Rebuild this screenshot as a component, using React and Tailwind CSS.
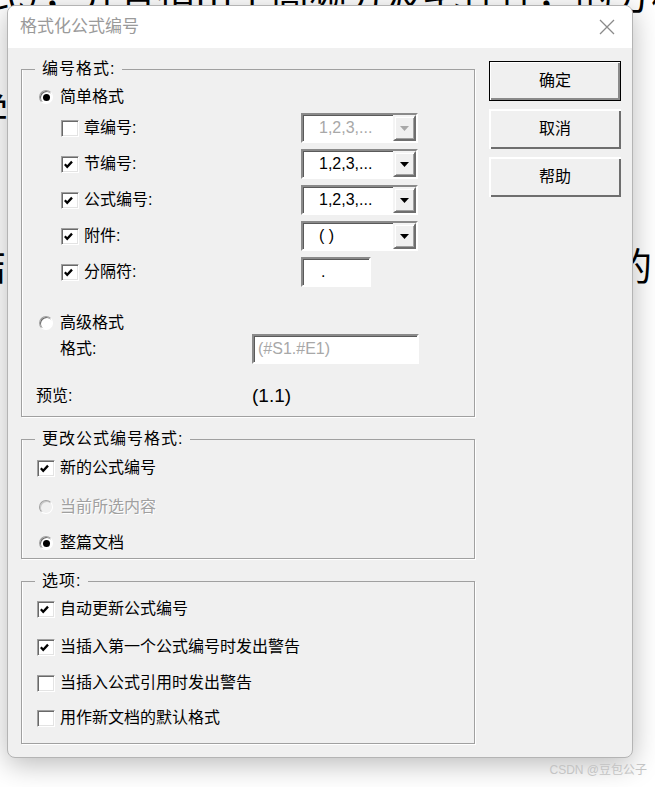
import React from "react";

const UI = "font-['Liberation_Sans','Noto_Sans_CJK_SC',sans-serif]";

function Check({ checked }) {
  return (
    <span className="flex h-[17px] w-[18px] shrink-0 items-center border border-t-[#a0a0a0] border-l-[#a0a0a0] border-r-white border-b-white bg-white pl-[2px] shadow-[inset_1px_1px_0_#696969,inset_-1px_-1px_0_#e3e3e3]">
      {checked && (
        <svg width="9" height="9" viewBox="0 0 9 9">
          <path d="M0.8 4.2 L3.2 6.8 L8 1.6" stroke="#000" strokeWidth="2.3" fill="none" />
        </svg>
      )}
    </span>
  );
}

function Radio({ checked, disabled }) {
  return (
    <span
      className={`flex h-[14px] w-[14px] shrink-0 items-center justify-center rounded-full border border-t-[#a0a0a0] border-l-[#a0a0a0] border-r-white border-b-white ${
        disabled
          ? "bg-[#f0f0f0] shadow-[inset_1px_1px_0_#c8c8c8]"
          : "bg-white shadow-[inset_1px_1px_0_#696969]"
      }`}
    >
      {checked && <span className="h-[7px] w-[7px] rounded-full bg-black" />}
    </span>
  );
}

function Combo({ value, disabled }) {
  return (
    <div className="flex h-[30px] w-[117px] border-2 border-t-[#8a8a8a] border-l-[#8a8a8a] border-r-white border-b-white bg-white shadow-[inset_1px_1px_0_#5a5a5a]">
      <span
        className={`flex-1 pl-[16px] text-[16px] leading-[26px] ${
          disabled ? "text-[#a8a8a8]" : "text-black"
        }`}
      >
        {value}
      </span>
      <span className="flex h-[26px] w-[23px] items-center justify-center border-2 border-t-[#f4f4f4] border-l-[#f4f4f4] border-r-[#6e6e6e] border-b-[#6e6e6e] bg-[#f0f0f0] shadow-[inset_1px_1px_0_#fff,inset_-1px_-1px_0_#a0a0a0]">
        <svg width="9" height="5" viewBox="0 0 9 5">
          <polygon points="0,0 9,0 4.5,5" fill={disabled ? "#a8a8a8" : "#000"} />
        </svg>
      </span>
    </div>
  );
}

function TextBox({ value, className, textClass }) {
  return (
    <div
      className={`flex h-[30px] items-center border-2 border-t-[#8a8a8a] border-l-[#8a8a8a] border-r-white border-b-white bg-white shadow-[inset_1px_1px_0_#5a5a5a] ${className}`}
    >
      <span className={`text-[16px] leading-[26px] ${textClass}`}>{value}</span>
    </div>
  );
}

function Button({ children, isDefault }) {
  return (
    <div
      className={`flex h-[40px] w-[132px] items-center justify-center bg-[#f0f0f0] text-[16px] text-black ${
        isDefault
          ? "border border-black shadow-[inset_1px_1px_0_#fff,inset_-2px_-2px_0_#8a8a8a]"
          : "shadow-[inset_2px_2px_0_#fff,inset_-2px_-2px_0_#6e6e6e]"
      }`}
    >
      {children}
    </div>
  );
}

function Group({ title, className, children }) {
  return (
    <fieldset
      className={`w-[454px] border border-[#a0a0a0] shadow-[inset_1px_0_0_#fff,1px_1px_0_#fff] ${className}`}
    >
      <legend className="ml-[13px] px-[7px] text-[16px] leading-[20px] tracking-[1px] text-black">
        {title}
      </legend>
      {children}
    </fieldset>
  );
}

function CheckRow({ label, checked, className }) {
  return (
    <div className={`flex h-[22px] items-center pl-[15px] ${className}`}>
      <Check checked={checked} />
      <span className="ml-[5px] text-[16px] leading-[22px] text-black">{label}</span>
    </div>
  );
}

function RadioRow({ label, checked, disabled, className }) {
  return (
    <div className={`flex h-[22px] items-center pl-[17px] ${className}`}>
      <Radio checked={checked} disabled={disabled} />
      <span
        className={`ml-[7px] text-[16px] leading-[22px] ${
          disabled ? "text-[#a0a0a0] [text-shadow:1px_1px_0_#fff]" : "text-black"
        }`}
      >
        {label}
      </span>
    </div>
  );
}

const numberRows = [
  { label: "章编号:", checked: false, value: "1,2,3,...", disabled: true },
  { label: "节编号:", checked: true, value: "1,2,3,..." },
  { label: "公式编号:", checked: true, value: "1,2,3,..." },
  { label: "附件:", checked: true, value: "( )" },
  { label: "分隔符:", checked: true, value: "." },
];

export default function App() {
  return (
    <div className={`relative h-[787px] w-full overflow-hidden bg-white ${UI}`}>
      {/* document behind the dialog */}
      <div className="whitespace-nowrap font-['Noto_Sans_CJK_SC',sans-serif] text-[38px] leading-[42px] text-black">
        <p className="-ml-[14px] -mt-[28px]">式），并且指出了高频分波宅性性，的分析性。</p>
        <p className="-ml-[30px] mt-[75px]">学习了相关的分析方法</p>
        <p className="-ml-[32px] mt-[112px]">结合所提出的方法其分析结果进行验证的</p>
      </div>

      {/* dialog */}
      <div className="absolute left-[7px] top-[5px] flex h-[753px] w-[626px] flex-col overflow-hidden rounded-[8px] border border-[#b4b4b4] bg-[#f0f0f0] shadow-[0_6px_28px_rgba(0,0,0,0.28)]">
        <div className="flex h-[42px] shrink-0 items-center justify-between bg-white pl-[12px] pr-[17px]">
          <span className="text-[17px] text-[#9a9a9a]">格式化公式编号</span>
          <svg width="16" height="16" viewBox="0 0 16 16">
            <path d="M1 1 L15 15 M15 1 L1 15" stroke="#8a8a8a" strokeWidth="1.3" />
          </svg>
        </div>

        <div className="flex pl-[13px]">
          <div className="mt-[11px] flex flex-col">
            <Group title="编号格式:" className="h-[358px]">
              <RadioRow label="简单格式" checked className="mt-[7px]" />
              <div className="mt-[2px] flex flex-col">
                {numberRows.map((r) => (
                  <div key={r.label} className="flex h-[36px] items-center pl-[39px]">
                    <Check checked={r.checked} />
                    <span className="ml-[5px] flex-1 text-[16px] leading-[22px] text-black">
                      {r.label}
                    </span>
                    <div className="mr-[56px] w-[117px]">
                      {r.label === "分隔符:" ? (
                        <TextBox value={r.value} className="w-[70px] pl-[18px]" textClass="text-black" />
                      ) : (
                        <Combo value={r.value} disabled={r.disabled} />
                      )}
                    </div>
                  </div>
                ))}
              </div>
              <RadioRow label="高级格式" className="mt-[22px]" />
              <div className="flex h-[30px] items-center pl-[38px]">
                <span className="w-[192px] text-[16px] leading-[22px] text-black">格式:</span>
                <TextBox value="(#S1.#E1)" className="w-[167px] pl-[4px]" textClass="text-[#a8a8a8]" />
              </div>
              <div className="mt-[19px] flex h-[26px] items-center pl-[14px]">
                <span className="w-[216px] text-[16px] leading-[22px] text-black">预览:</span>
                <span className="text-[19px] font-medium leading-[26px] text-black">(1.1)</span>
              </div>
            </Group>

            <Group title="更改公式编号格式:" className="mt-[12px] h-[130px]">
              <CheckRow label="新的公式编号" checked className="mt-[8px]" />
              <RadioRow label="当前所选内容" disabled className="mt-[17px]" />
              <RadioRow label="整篇文档" checked className="mt-[14px]" />
            </Group>

            <Group title="选项:" className="mt-[12px] h-[173px]">
              <CheckRow label="自动更新公式编号" checked className="mt-[7px]" />
              <CheckRow label="当插入第一个公式编号时发出警告" checked className="mt-[16px]" />
              <CheckRow label="当插入公式引用时发出警告" className="mt-[14px]" />
              <CheckRow label="用作新文档的默认格式" className="mt-[13px]" />
            </Group>
          </div>

          <div className="ml-[14px] mt-[13px] flex flex-col gap-[8px]">
            <Button isDefault>确定</Button>
            <Button>取消</Button>
            <Button>帮助</Button>
          </div>
        </div>
      </div>

      <span className="absolute bottom-[8px] right-[8px] text-[12px] text-[#c4c4c4]">CSDN @豆包公子</span>
    </div>
  );
}
